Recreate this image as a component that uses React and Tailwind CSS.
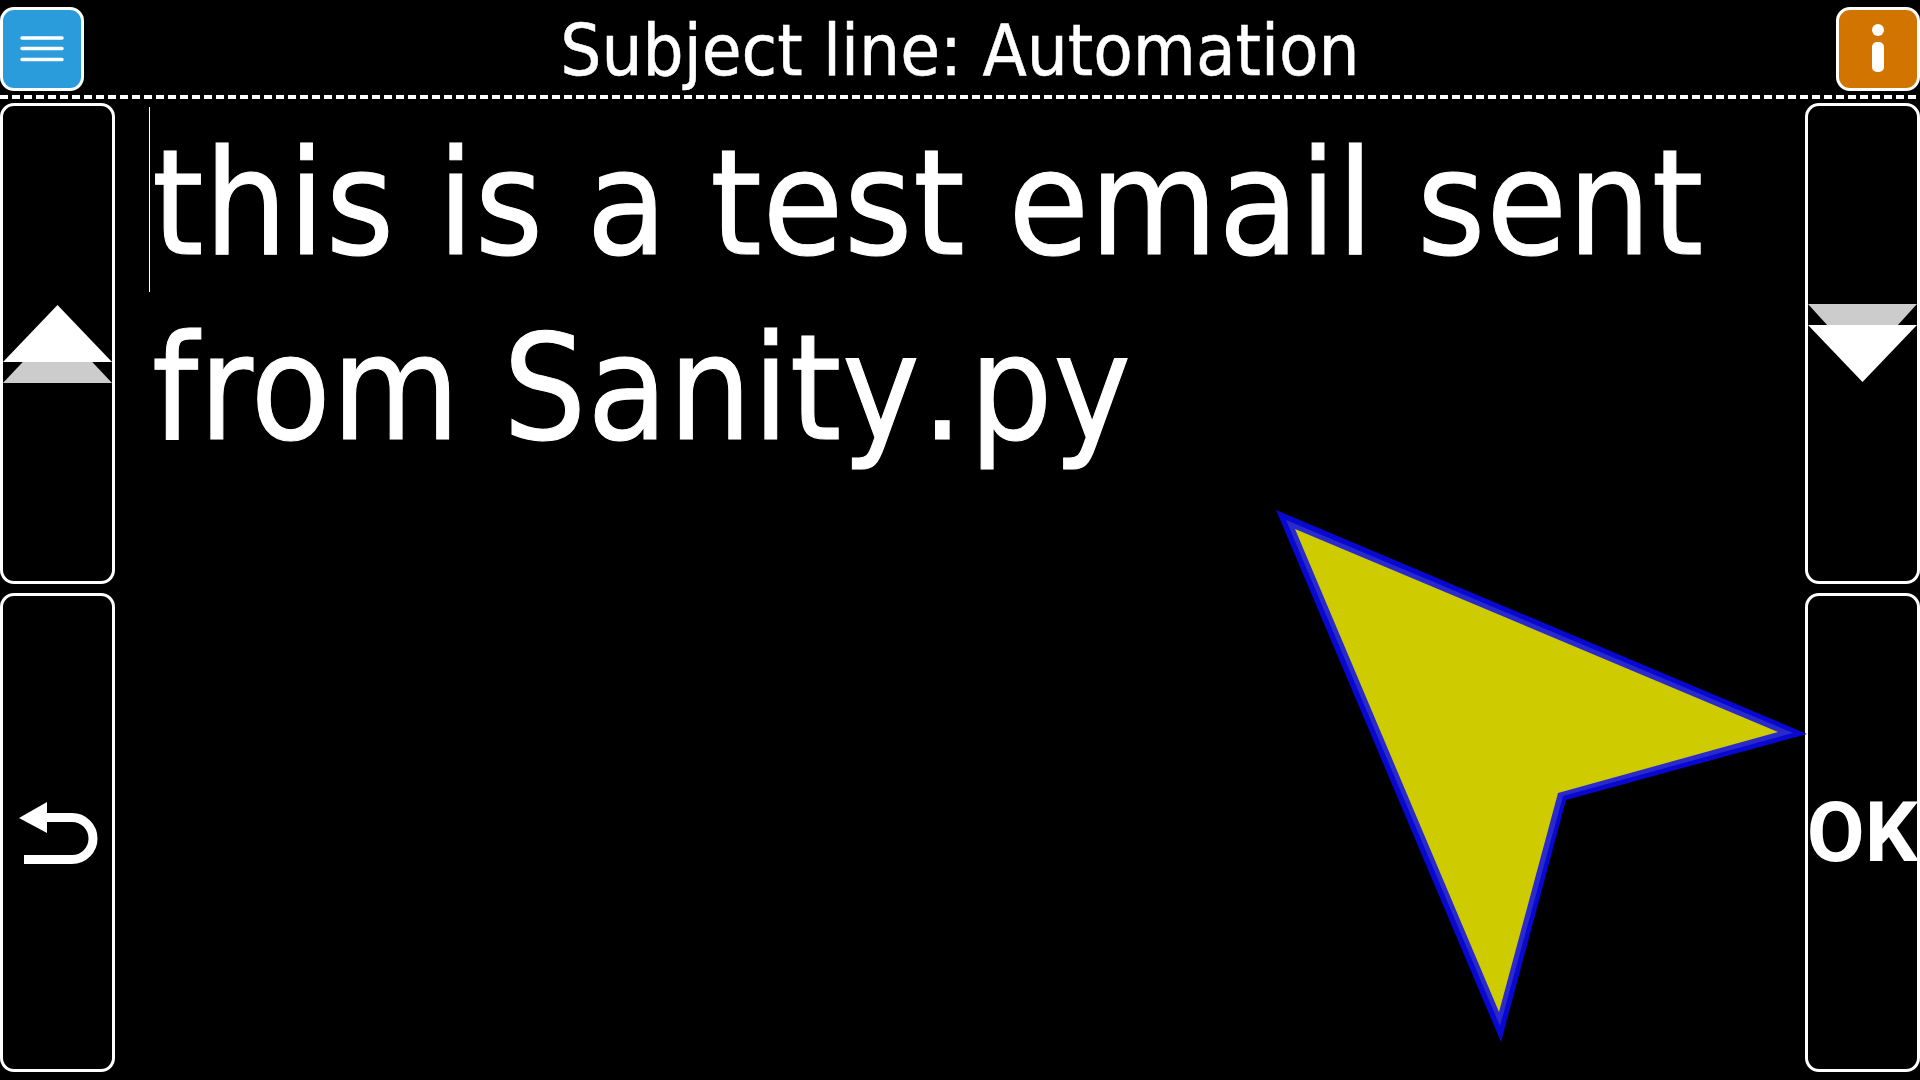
import React from 'react';

const font = { fontFamily: '"DejaVu Sans Condensed", "DejaVu Sans", sans-serif', fontStretch: 'condensed' };

function Panel({ className, children }) {
    return (
        <div className={"relative rounded-[14px] border-[3px] border-white overflow-hidden " + className}>
            {children}
        </div>
    );
}

function Pointer() {
    return (
        <svg className="absolute left-0 top-0 pointer-events-none" width="1920" height="1080" viewBox="0 0 1920 1080">
            <polygon points="1276,510 1807,734 1566,800 1501,1042" fill="#0808d0" />
            <polygon points="1286,520 1793,733 1563,796 1500,1026" fill="#2a2acc" />
            <polygon points="1295,529 1778,732 1558,793 1499,1012" fill="#cecc00" />
        </svg>
    );
}

export default function App() {
    return (
        <div className="relative flex flex-col w-[1920px] h-[1080px] bg-black overflow-hidden text-white" style={font}>
            <div className="flex items-center justify-between h-[95px] pt-[7px] pb-[4px]">
                <button className="flex items-center justify-center w-[84px] h-[84px] rounded-[14px] border-[3px] border-white bg-[#2a9cdc]">
                    <svg width="44" height="26" viewBox="0 0 44 26">
                        <path d="M2 2H42M2 12.5H42M2 23.5H42" stroke="#fff" strokeWidth="3.5" strokeLinecap="round" />
                    </svg>
                </button>
                <div className="text-[72px] leading-none pt-[2px] [-webkit-text-stroke:0.5px_white]">Subject line: Automation</div>
                <button className="flex items-center justify-center w-[84px] h-[84px] rounded-[14px] border-[3px] border-white bg-[#d27400]">
                    <svg width="14" height="50" viewBox="0 0 14 50">
                        <circle cx="7" cy="6" r="6" fill="#fff" />
                        <rect x="1" y="18" width="12" height="30" rx="5" fill="#fff" />
                    </svg>
                </button>
            </div>
            <div className="h-[4px] bg-[repeating-linear-gradient(90deg,#fff_0_8px,transparent_8px_12px)]"></div>

            <div className="flex flex-1 pt-[4px] pb-[8px]">
                <div className="flex flex-col gap-[9px] w-[115px]">
                    <Panel className="h-[481px]">
                        <svg className="absolute left-0 top-[199px]" width="109" height="80" viewBox="0 0 109 80">
                            <polygon points="54.5,20 109,78 0,78" fill="#ccc" />
                            <polygon points="54.5,0 109,57 0,57" fill="#fff" />
                        </svg>
                    </Panel>
                    <Panel className="flex-1">
                        <svg className="absolute left-[16px] top-[204px]" width="80" height="70" viewBox="19 800 80 70">
                            <polygon points="19,818 47,802 47,833" fill="#fff" />
                            <path d="M45 817.5H72a21 21 0 0 1 0 42H24" fill="none" stroke="#fff" strokeWidth="9" />
                        </svg>
                    </Panel>
                </div>

                <div className="flex-1 pl-[34px] pt-[4px]">
                    <div className="relative pt-[4px] text-[146px] leading-[185px] tracking-[0.8px] pl-[3px] w-[1620px] [-webkit-text-stroke:1px_white]">
                        <div className="absolute left-0 top-0 w-[1px] h-[185px] bg-white"></div>
                        <div>this is a test email sent</div>
                        <div>from Sanity<span className="pl-[1px] pr-[5px]">.</span>py</div>
                    </div>
                </div>

                <div className="flex flex-col gap-[9px] w-[115px]">
                    <Panel className="h-[481px]">
                        <svg className="absolute left-0 top-[198px]" width="109" height="80" viewBox="0 0 109 80">
                            <polygon points="0,0 109,0 54.5,60" fill="#ccc" />
                            <polygon points="0,21 109,21 54.5,78" fill="#fff" />
                        </svg>
                    </Panel>
                    <Panel className="flex-1">
                        <div className="flex items-center justify-center h-full text-[84px] leading-none font-bold font-['Roboto'] [font-stretch:normal]">OK</div>
                    </Panel>
                </div>
            </div>
            <Pointer />
        </div>
    );
}
